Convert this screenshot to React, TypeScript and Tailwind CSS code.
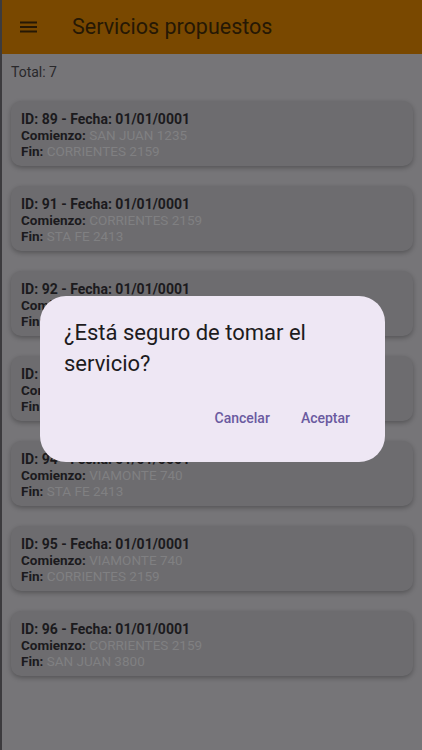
type Servicio = {
  id: number
  fecha: string
  comienzo: string
  fin: string
}

const servicios: Servicio[] = [
  { id: 89, fecha: '01/01/0001', comienzo: 'SAN JUAN 1235', fin: 'CORRIENTES 2159' },
  { id: 91, fecha: '01/01/0001', comienzo: 'CORRIENTES 2159', fin: 'STA FE 2413' },
  { id: 92, fecha: '01/01/0001', comienzo: 'SAN JUAN 1235', fin: 'STA FE 2413' },
  { id: 93, fecha: '01/01/0001', comienzo: 'SAN JUAN 1235', fin: 'VIAMONTE 740' },
  { id: 94, fecha: '01/01/0001', comienzo: 'VIAMONTE 740', fin: 'STA FE 2413' },
  { id: 95, fecha: '01/01/0001', comienzo: 'VIAMONTE 740', fin: 'CORRIENTES 2159' },
  { id: 96, fecha: '01/01/0001', comienzo: 'CORRIENTES 2159', fin: 'SAN JUAN 3800' },
]

function MenuIcon() {
  return (
    <svg width="18" height="12" viewBox="0 0 18 12" className="text-[#261805]" fill="currentColor">
      <rect x="0" y="0.5" width="17" height="2" />
      <rect x="0" y="5" width="17" height="2" />
      <rect x="0" y="9.5" width="17" height="2" />
    </svg>
  )
}

function ServicioCard({ servicio }: { servicio: Servicio }) {
  return (
    <div className="flex h-[65px] flex-col justify-center rounded-[10px] bg-[#6d6c6f] px-[10px] pt-[2px] text-[13.5px] leading-[16px] shadow-[0_2px_5px_rgba(0,0,0,0.28)]">
      <p className="text-[14px] font-bold text-[#1b1a1d]">
        ID: {servicio.id} - Fecha: {servicio.fecha}
      </p>
      <p>
        <span className="font-bold text-[#1b1a1d]">Comienzo:</span>{' '}
        <span className="text-[#808082]">{servicio.comienzo}</span>
      </p>
      <p>
        <span className="font-bold text-[#1b1a1d]">Fin:</span>{' '}
        <span className="text-[#808082]">{servicio.fin}</span>
      </p>
    </div>
  )
}

export default function App() {
  return (
    <div className="relative h-[750px] w-[422px] overflow-hidden border-l-2 border-l-[#3c3b3e] bg-[#767578] font-['Roboto',sans-serif]">
      <header className="flex h-[54px] items-center bg-[#794800] pl-[18px]">
        <MenuIcon />
        <h1 className="ml-[34px] text-[21.5px] text-[#261805]">Servicios propuestos</h1>
      </header>

      <div className="px-[9px]">
        <p className="mt-[9px] text-[14px] leading-[18px] text-[#29282b]">Total: 7</p>
        <div className="mt-[20px] flex flex-col gap-[20px]">
          {servicios.map((s) => (
            <ServicioCard key={s.id} servicio={s} />
          ))}
        </div>
      </div>

      {/* dialogo de confirmacion */}
      <div className="absolute left-[38px] top-[296px] flex h-[166px] w-[345px] flex-col rounded-[26px] bg-[#eee7f4] px-[24px] pt-[21px]">
        <p className="text-[22px] leading-[31px] text-[#1d1b20]">¿Está seguro de tomar el servicio?</p>
        <div className="mt-auto mb-[33px] flex justify-end gap-[31px] pr-[11px] text-[14px] font-medium text-[#6a5aa0]">
          <span>Cancelar</span>
          <span>Aceptar</span>
        </div>
      </div>
    </div>
  )
}
